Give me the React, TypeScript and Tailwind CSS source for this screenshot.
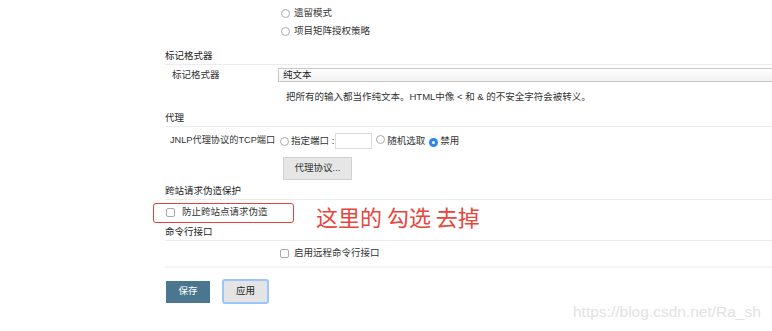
import React from 'react';

const Radio = ({ checked = false }: { checked?: boolean }) =>
  checked ? (
    <span className="inline-flex h-[9px] w-[9px] items-center justify-center rounded-full bg-[#2d86f0]">
      <span className="h-[3px] w-[3px] rounded-full bg-white" />
    </span>
  ) : (
    <span className="inline-block h-[9px] w-[9px] rounded-full border border-[#a9a9a9] bg-white" />
  );

const Checkbox = () => (
  <span className="inline-block h-[9px] w-[9px] rounded-[2px] border border-[#a9a9a9] bg-white" />
);

const SectionHeader = ({ title, className = '' }: { title: string; className?: string }) => (
  <div className={`flex h-[16px] items-center border-b border-[#ececec] text-[#222] ${className}`}>
    {title}
  </div>
);

export default function App() {
  return (
    <div className="relative h-[331px] w-[772px] overflow-hidden bg-white font-['Liberation_Sans','Noto_Sans_CJK_SC',sans-serif] text-[9.5px] text-[#333]">
      <div className="flex flex-col pl-[165px] pt-[4px]">
        {/* authorization strategy radios */}
        <div className="flex h-[18px] items-center gap-[4px] pl-[116px]">
          <Radio />
          <span>遗留模式</span>
        </div>
        <div className="flex h-[18px] items-center gap-[4px] pl-[116px]">
          <Radio />
          <span>项目矩阵授权策略</span>
        </div>

        {/* markup formatter */}
        <SectionHeader title="标记格式器" className="mt-[9px]" />
        <div className="flex h-[20px] items-center">
          <span className="w-[113px] pl-[7px]">标记格式器</span>
          <div className="flex h-[14px] flex-1 items-center border border-r-0 border-[#c8c8c8] bg-gradient-to-b from-white to-[#f2f2f2] pl-[4px] text-[#222]">
            纯文本
          </div>
        </div>
        <div className="mt-[4px] flex h-[16px] items-center pl-[121px]">
          把所有的输入都当作纯文本。HTML中像 &lt; 和 &amp; 的不安全字符会被转义。
        </div>

        {/* agent */}
        <SectionHeader title="代理" className="mt-[6px]" />
        <div className="mt-[6px] flex h-[16px] items-center">
          <span className="w-[115px] whitespace-nowrap pl-[5px] text-[9.2px]">JNLP代理协议的TCP端口</span>
          <Radio />
          <span className="ml-[2px]">指定端口 :</span>
          <span className="ml-[1px] h-[16px] w-[37px] border border-[#dcdcdc] bg-white" />
          <span className="ml-[4px]"><Radio /></span>
          <span className="ml-[2px]">随机选取</span>
          <span className="ml-[4px]"><Radio checked /></span>
          <span className="ml-[2px]">禁用</span>
        </div>
        <div className="mt-[8px] pl-[118px]">
          <button className="flex h-[23px] w-[69px] items-center justify-center border border-[#d2d2d2] bg-[#e6e6e6] text-[#333]">
            代理协议...
          </button>
        </div>

        {/* csrf */}
        <SectionHeader title="跨站请求伪造保护" className="mt-[4px]" />
        <div className="mt-[1px] flex h-[22px] items-center gap-[7px] pl-[1px]">
          <Checkbox />
          <span>防止跨站点请求伪造</span>
        </div>

        {/* cli */}
        <SectionHeader title="命令行接口" className="mt-[2px]" />
        <div className="mt-[4px] flex h-[16px] items-center gap-[5px] pl-[115px]">
          <Checkbox />
          <span>启用远程命令行接口</span>
        </div>
        <div className="mt-[5px] h-[2px] bg-[#f5f5f5]" />

        {/* buttons */}
        <div className="mt-[11px] flex items-center gap-[12px] pl-[1px]">
          <button className="flex h-[22px] w-[44px] items-center justify-center bg-[#4a768f] text-white">
            保存
          </button>
          <button className="flex h-[25px] w-[47px] items-center justify-center rounded-[3px] border-2 border-[#9cc6fb] bg-[#e4e4e4] text-[#222]">
            应用
          </button>
        </div>
      </div>

      {/* annotation */}
      <div className="absolute left-[153px] top-[203px] h-[20px] w-[141px] rounded-[3px] border-[1.5px] border-[#e5413b]" />
      <div className="absolute left-[316px] top-[201px] font-['Noto_Sans_CJK_SC',sans-serif] text-[22px] leading-[30px] text-[#e8453d]">
        这里的 勾选 去掉
      </div>

      {/* watermark */}
      <div className="absolute left-[573px] top-[301px] text-[15.5px] leading-[22px] text-[#e2e2e2]">
        https://blog.csdn.net/Ra_sh
      </div>
    </div>
  );
}
